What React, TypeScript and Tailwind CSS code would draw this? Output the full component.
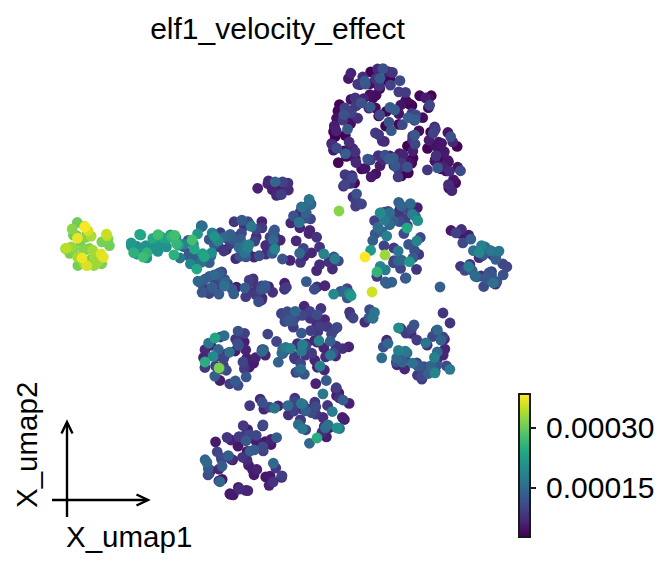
import React from "react";

type Cluster = [number, number, number, number, number, number, number];

const STOPS = [
  "#440154", "#482475", "#414487", "#355f8d", "#2a788e", "#21918c",
  "#22a884", "#44bf70", "#7ad151", "#bddf26", "#fde725",
];

function hex(c: string) {
  return [1, 3, 5].map((i) => parseInt(c.slice(i, i + 2), 16));
}

function viridis(t: number) {
  const v = Math.max(0, Math.min(1, t)) * 10;
  const i = Math.min(9, Math.floor(v));
  const f = v - i;
  const a = hex(STOPS[i]);
  const b = hex(STOPS[i + 1]);
  const m = a.map((x, k) => Math.round(x + (b[k] - x) * f));
  return `rgb(${m[0]},${m[1]},${m[2]})`;
}

function mulberry32(seed: number) {
  let a = seed;
  return () => {
    a |= 0;
    a = (a + 0x6d2b79f5) | 0;
    let t = Math.imul(a ^ (a >>> 15), 1 | a);
    t = (t + Math.imul(t ^ (t >>> 7), 61 | t)) ^ t;
    return ((t ^ (t >>> 14)) >>> 0) / 4294967296;
  };
}

// cx, cy, rx, ry, n, tMean, tSpread
const CLUSTERS: Cluster[] = [
  // top blob
  [375, 80, 30, 12, 22, 0.0, 0.3],
  [362, 105, 30, 14, 26, 0.0, 0.3],
  [412, 105, 24, 16, 24, 0.0, 0.3],
  [345, 140, 14, 28, 24, 0.0, 0.3],
  [395, 135, 20, 14, 12, 0.0, 0.3],
  [428, 148, 30, 22, 32, 0.0, 0.3],
  [382, 168, 30, 13, 24, 0.0, 0.3],
  [450, 175, 14, 16, 14, 0.0, 0.25],
  [345, 180, 12, 10, 10, 0.0, 0.25],
  [357, 200, 5, 10, 5, 0.1, 0.2],
  // left yellow cluster
  [89, 244, 24, 25, 38, 0.78, 0.2],
  // trail
  [155, 246, 32, 14, 30, 0.5, 0.2],
  // blue-teal group
  [200, 245, 18, 25, 26, 0.22, 0.4],
  // left mass
  [212, 282, 16, 14, 22, 0.18, 0.25],
  // upper body
  [250, 240, 33, 22, 50, 0.1, 0.35],
  [275, 190, 18, 10, 14, 0.08, 0.3],
  [303, 215, 14, 22, 16, 0.1, 0.35],
  // middle scattered
  [312, 262, 30, 28, 22, 0.1, 0.35],
  // horizontal band
  [260, 290, 30, 12, 24, 0.08, 0.3],
  // middle cluster
  [305, 340, 45, 35, 70, 0.1, 0.4],
  // diagonal chain
  [340, 295, 12, 8, 8, 0.2, 0.35],
  [362, 315, 14, 8, 10, 0.12, 0.35],
  // right arm upper
  [395, 245, 30, 40, 50, 0.15, 0.45],
  [408, 205, 14, 8, 8, 0.05, 0.3],
  // far right
  [485, 265, 25, 22, 36, 0.12, 0.35],
  [460, 235, 12, 10, 8, 0.05, 0.3],
  // lower right
  [418, 352, 40, 30, 50, 0.1, 0.4],
  // bottom-left lobe top
  [233, 358, 30, 28, 40, 0.08, 0.4],
  // lower middle
  [318, 410, 32, 35, 45, 0.08, 0.35],
  [262, 402, 20, 15, 7, 0.1, 0.3],
  // bottom-left lobe
  [245, 460, 42, 42, 62, 0.06, 0.3],
];

const EXTRA: [number, number, number][] = [
  [440, 287, 0.3],
  [443, 313, 0.15],
  [450, 323, 0.15],
  [365, 257, 1.0],
  [385, 255, 0.85],
  [372, 292, 0.93],
  [377, 272, 0.65],
  [407, 228, 0.6],
  [339, 211, 0.82],
  [219, 368, 0.8],
  [205, 362, 0.62],
  [215, 338, 0.58],
  [317, 438, 0.62],
  [337, 428, 0.5],
  [192, 240, 0.7],
  [85, 227, 1.0],
  [82, 258, 0.98],
  [101, 254, 0.95],
  [176, 238, 0.45],
  [180, 258, 0.4],
];

function makePoints() {
  const rnd = mulberry32(20240);
  const pts: { x: number; y: number; t: number }[] = [];
  for (const [cx, cy, rx, ry, n, tm, ts] of CLUSTERS) {
    for (let i = 0; i < n; i++) {
      const a = rnd() * Math.PI * 2;
      const r = Math.sqrt(rnd());
      const t = tm + ts * Math.pow(rnd(), 2);
      pts.push({ x: cx + Math.cos(a) * r * rx, y: cy + Math.sin(a) * r * ry, t });
    }
  }
  for (const [x, y, t] of EXTRA) pts.push({ x, y, t });
  pts.sort((a, b) => a.t - b.t);
  return pts;
}

const POINTS = makePoints();

export default function App() {
  return (
    <div className="w-[672px] h-[568px] bg-white text-black font-['Liberation_Sans',Arial,sans-serif] flex flex-col overflow-hidden">
      <div className="h-[56px] w-[555px] pt-[14px] text-center text-[30px] leading-[30px]">
        elf1_velocity_effect
      </div>
      <div className="flex flex-row">
        <svg width={516} height={512} viewBox="0 56 516 512" className="shrink-0">
          {POINTS.map((p, i) => (
            <circle key={i} cx={p.x} cy={p.y} r={5.4} fill={viridis(p.t)} />
          ))}
          <g stroke="black" strokeWidth={2.4} fill="none" strokeLinecap="butt">
            <line x1={67} y1={517} x2={67} y2={423} />
            <polyline points="61.5,433.5 67,422 72.5,433.5" />
            <line x1={52} y1={500} x2={147} y2={500} />
            <polyline points="136.5,494.5 148,500 136.5,505.5" />
          </g>
          <text x={66} y={547} fontSize={29.5} fill="black">X_umap1</text>
          <text transform="translate(37,508) rotate(-90)" fontSize={29.5} fill="black">X_umap2</text>
        </svg>
        <div className="ml-[2px] mt-[337px] flex flex-row">
          <div className="w-[13px] h-[145px] border-2 border-[#1a1a1a] bg-[linear-gradient(to_top,#440154,#482475,#414487,#355f8d,#2a788e,#21918c,#22a884,#44bf70,#7ad151,#bddf26,#fde725)]" />
          <div className="flex flex-col pt-[20px] gap-[30px]">
            <div className="h-[30px] flex flex-row items-center">
              <div className="w-[5px] h-[2px] bg-[#1a1a1a]" />
              <span className="ml-[10px] text-[30px] leading-[30px]">0.00030</span>
            </div>
            <div className="h-[30px] flex flex-row items-center">
              <div className="w-[5px] h-[2px] bg-[#1a1a1a]" />
              <span className="ml-[10px] text-[30px] leading-[30px]">0.00015</span>
            </div>
          </div>
        </div>
      </div>
    </div>
  );
}
